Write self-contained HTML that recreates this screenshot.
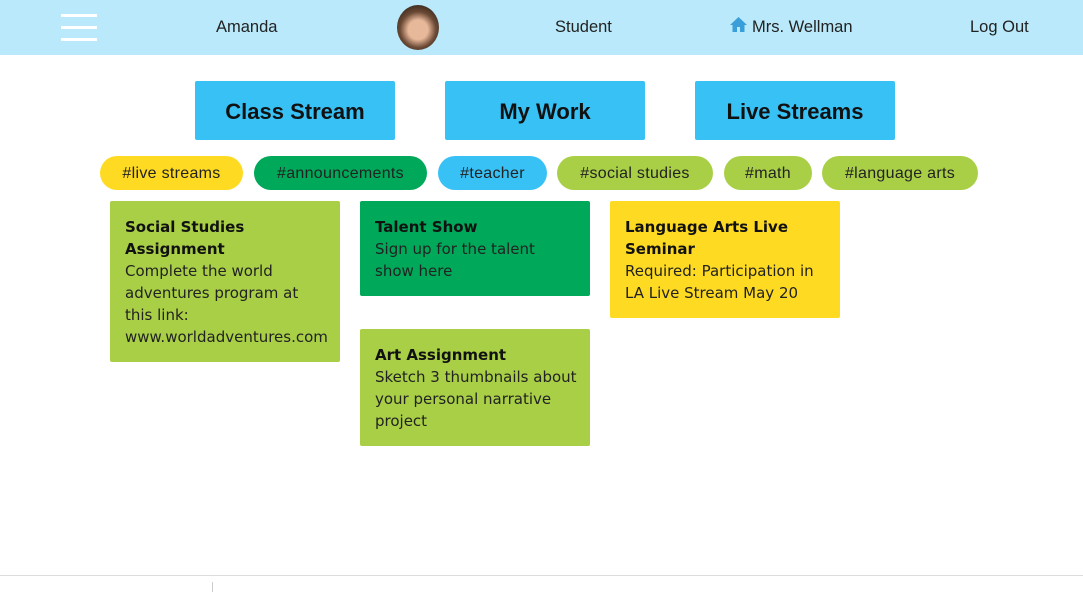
<!DOCTYPE html>
<html><head><style>
body{margin:0;width:1083px;height:592px;background:#fff;position:relative;overflow:hidden;font-family:"Liberation Sans",sans-serif;}
.hdr{position:absolute;left:0;top:0;width:1083px;height:55px;background:#b9e9fa;}
.ham{position:absolute;left:61px;width:36px;height:3px;background:#fff;}
.nav{position:absolute;top:18px;font-size:16.5px;color:#222;}
.btn{position:absolute;top:81px;width:200px;height:59px;background:#38c1f5;border-radius:2px;text-align:center;line-height:62px;font-size:22px;font-weight:bold;color:#111;}
.pill{position:absolute;top:156px;height:34px;border-radius:17px;text-align:center;line-height:36px;font-size:16px;color:#222;letter-spacing:0.3px;}
.card{position:absolute;width:200px;padding:15px 15px 14px 15px;border-radius:2px;font-family:"DejaVu Sans",sans-serif;font-size:15px;line-height:22px;color:#222;white-space:nowrap;}
.card b{color:#111;}
</style></head><body>
<div class="hdr">
<div class="ham" style="top:14px"></div><div class="ham" style="top:26px"></div><div class="ham" style="top:38px"></div>
<div class="nav" style="left:216px">Amanda</div>
<div style="position:absolute;left:397px;top:5px;width:42px;height:45px;border-radius:50%;background:radial-gradient(circle at 50% 55%,#e8b89a 0 30%,#6b4a35 55%,#3a2a20 80%);"></div>
<div class="nav" style="left:555px">Student</div>
<svg style="position:absolute;left:729px;top:16px" width="19" height="17" viewBox="0 0 19 17"><path d="M9.5 1L1 9h2.5v7h4.5v-5h3v5h4.5V9H18z" fill="#3a9fd8"/></svg>
<div class="nav" style="left:752px">Mrs. Wellman</div>
<div class="nav" style="left:970px">Log Out</div>
</div>
<div class="btn" style="left:195px">Class Stream</div>
<div class="btn" style="left:445px">My Work</div>
<div class="btn" style="left:695px">Live Streams</div>
<div class="pill" style="left:100px;width:143px;background:#fedb22">#live streams</div>
<div class="pill" style="left:254px;width:173px;background:#00a859">#announcements</div>
<div class="pill" style="left:438px;width:109px;background:#38c1f5">#teacher</div>
<div class="pill" style="left:557px;width:156px;background:#a9cf46">#social studies</div>
<div class="pill" style="left:724px;width:88px;background:#a9cf46">#math</div>
<div class="pill" style="left:822px;width:156px;background:#a9cf46">#language arts</div>
<div class="card" style="left:110px;top:201px;height:132px;background:#a9cf46"><b>Social Studies<br>Assignment</b><br>Complete the world<br>adventures program at<br>this link:<br>www.worldadventures.com</div>
<div class="card" style="left:360px;top:201px;height:66px;background:#00a859"><b>Talent Show</b><br>Sign up for the talent<br>show here</div>
<div class="card" style="left:360px;top:329px;height:88px;background:#a9cf46"><b>Art Assignment</b><br>Sketch 3 thumbnails about<br>your personal narrative<br>project</div>
<div class="card" style="left:610px;top:201px;height:88px;background:#fedb22"><b>Language Arts Live<br>Seminar</b><br>Required: Participation in<br>LA Live Stream May 20</div>
<div style="position:absolute;left:0;top:575px;width:1083px;height:1px;background:#ddd"></div>
<div style="position:absolute;left:212px;top:582px;width:1px;height:10px;background:#ccc"></div>
</body></html>
